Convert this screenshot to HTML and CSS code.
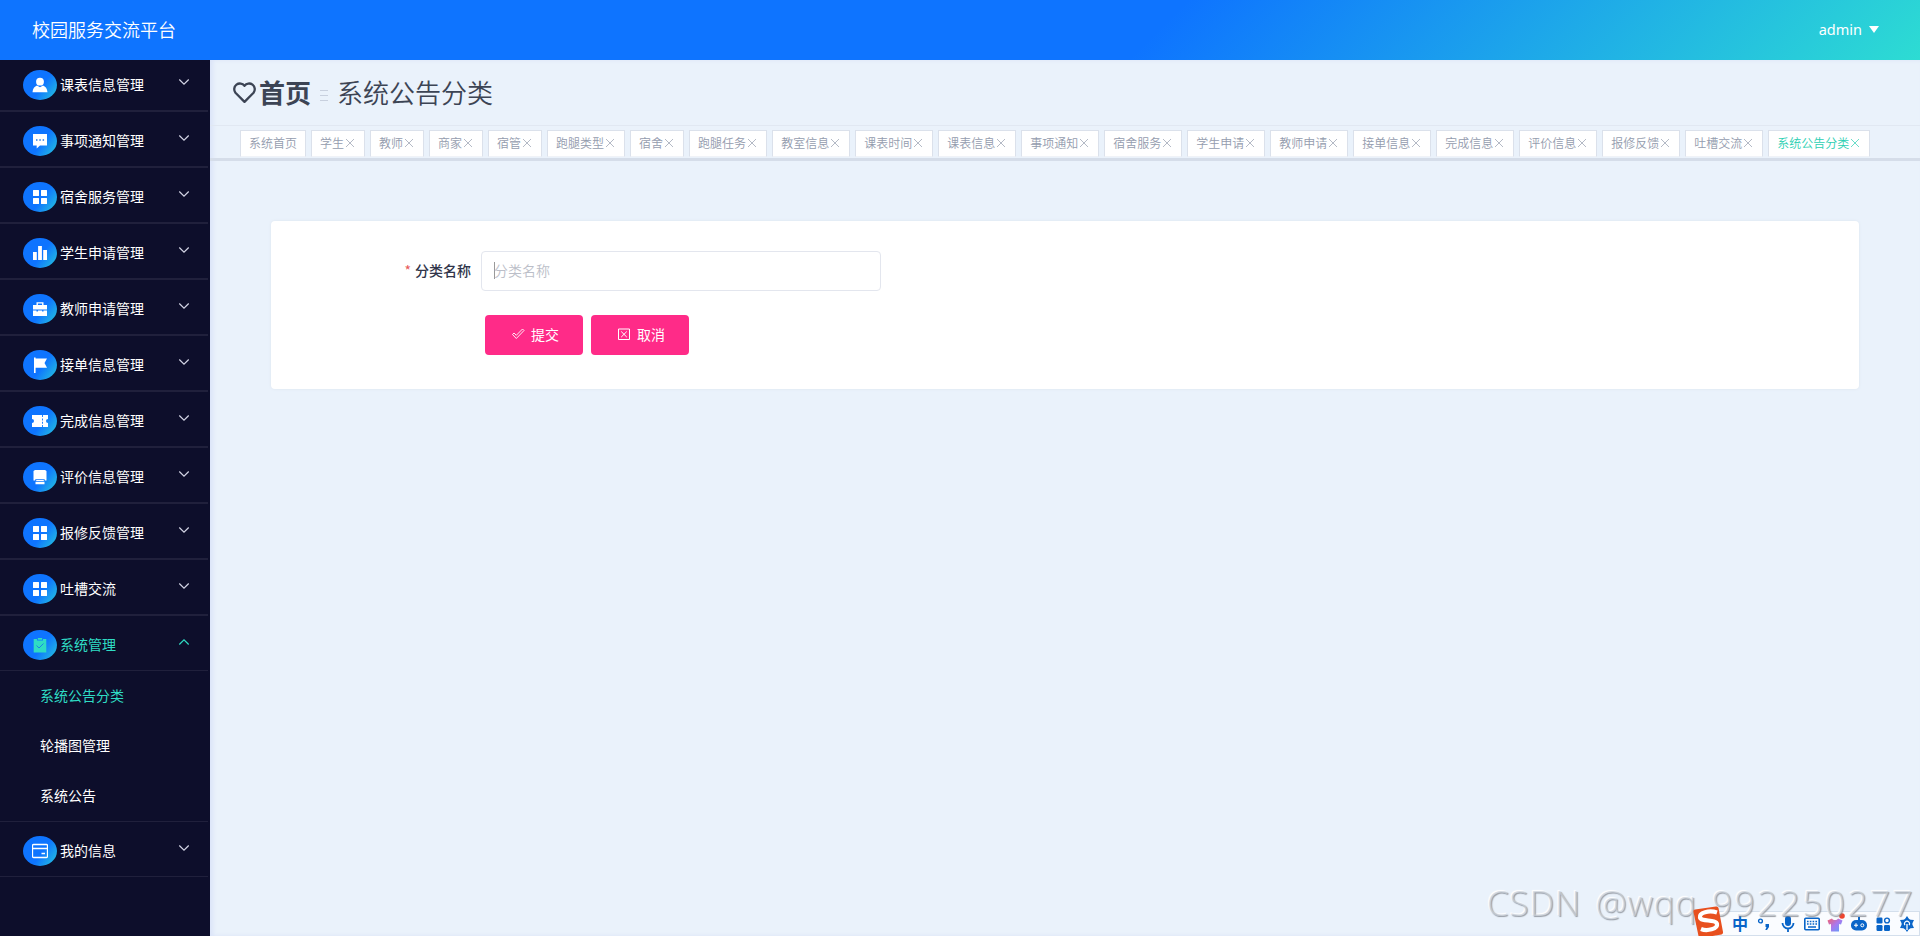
FILE: index.html
```html
<!DOCTYPE html>
<html lang="zh-CN">
<head>
<meta charset="utf-8">
<title>校园服务交流平台</title>
<link rel="stylesheet" href="styles.css">
</head>
<body>
<svg class="defs" width="0" height="0">
  <symbol id="down" viewBox="0 0 12 12"><path d="M1.3 3.5 6 8.2l4.700-4.700" fill="none" stroke="currentColor" stroke-width="1.2"/></symbol>
  <symbol id="grid" viewBox="0 0 16 16"><path fill="currentColor" d="M1.500 1h5a.5.5 0 0 1 .5.5v5a.5.5 0 0 1-.5.5h-5a.5.5 0 0 1-.5-.5v-5a.5.5 0 0 1 .5-.5zM9.500 1h5a.5.5 0 0 1 .5.5v5a.5.5 0 0 1-.5.5h-5a.5.5 0 0 1-.5-.5v-5a.5.5 0 0 1 .5-.5zM1.500 9h5a.5.5 0 0 1 .5.5v5a.5.5 0 0 1-.5.5h-5a.5.5 0 0 1-.5-.5v-5a.5.5 0 0 1 .5-.5zM9.500 9h5a.5.5 0 0 1 .5.5v5a.5.5 0 0 1-.5.5h-5a.5.5 0 0 1-.5-.5v-5a.5.5 0 0 1 .5-.5z"/></symbol>
  <symbol id="close" viewBox="0 0 12 12"><path d="M2 2l8 8M10 2l-8 8" stroke="currentColor" stroke-width=".7"/></symbol>
</svg>
<header class="topbar">
  <div class="brand">校园服务交流平台</div>
  <div class="user">admin <span class="caret"></span></div>
</header>
<div class="layout">
  <aside class="sidebar">
    <ul class="menu">
      <li class="item"><span class="badge"><svg viewBox="0 0 16 16"><circle cx="8" cy="4.700" r="3.900" fill="currentColor"/><path fill="currentColor" d="M.5 15.300c.3-3.600 2-6 4.500-6.800l3 1.700 3-1.700c2.500.8 4.200 3.200 4.500 6.800z"/></svg></span><span class="label">课表信息管理</span><svg class="arrow"><use href="#down"/></svg></li>
      <li class="item"><span class="badge"><svg viewBox="0 0 16 16"><path fill="currentColor" d="M1 1h14v11.500H8l-3.300 3v-3H1z"/><path stroke="#2277e8" stroke-width="1.500" d="M4 7h1.500M7.300 7h1.500M10.600 7h1.500"/></svg></span><span class="label">事项通知管理</span><svg class="arrow"><use href="#down"/></svg></li>
      <li class="item"><span class="badge"><svg><use href="#grid"/></svg></span><span class="label">宿舍服务管理</span><svg class="arrow"><use href="#down"/></svg></li>
      <li class="item"><span class="badge"><svg viewBox="0 0 16 16"><path fill="currentColor" d="M1 7h3.800v8H1zM6.100 1h3.800v14H6.100zM11.200 5H15v10h-3.800z"/></svg></span><span class="label">学生申请管理</span><svg class="arrow"><use href="#down"/></svg></li>
      <li class="item"><span class="badge"><svg viewBox="0 0 16 16"><path fill="currentColor" d="M4.500 4V1.200h7V4H15v4.600H1V4zm1.400 0h4.200V2.600H5.900zM1 9.600h3.500v1h1.400v-1h4.200v1h1.400v-1H15V15H1z"/></svg></span><span class="label">教师申请管理</span><svg class="arrow"><use href="#down"/></svg></li>
      <li class="item"><span class="badge"><svg viewBox="0 0 16 16"><path fill="currentColor" d="M2 .5h1.600v1H15L12.500 6l2.500 4.800H3.600V16H2z"/></svg></span><span class="label">接单信息管理</span><svg class="arrow"><use href="#down"/></svg></li>
      <li class="item"><span class="badge"><svg viewBox="0 0 16 16"><path fill="currentColor" d="M0 2h10v2h.9V2H16v4a2 2 0 0 0 0 4v4h-5.100v-2H10v2H0v-4a2 2 0 0 0 0-4zm10 3.500v2h.9v-2zm0 3.300v2h.9v-2z"/></svg></span><span class="label">完成信息管理</span><svg class="arrow"><use href="#down"/></svg></li>
      <li class="item"><span class="badge"><svg viewBox="0 0 16 16"><path fill="currentColor" d="M3 1h10l1.500 1v9.500h-1.800v-1.300H3.300v1.300H1.500V2zM4.200 11h7.600v1H4.200zM3.500 12.800h9v2.400h-9z"/></svg></span><span class="label">评价信息管理</span><svg class="arrow"><use href="#down"/></svg></li>
      <li class="item"><span class="badge"><svg><use href="#grid"/></svg></span><span class="label">报修反馈管理</span><svg class="arrow"><use href="#down"/></svg></li>
      <li class="item"><span class="badge"><svg><use href="#grid"/></svg></span><span class="label">吐槽交流</span><svg class="arrow"><use href="#down"/></svg></li>
      <li class="item thin active"><span class="badge"><svg viewBox="0 0 16 16"><path fill="currentColor" d="M1.700 2H5v1.500h6V2h3.300v13.500H1.700zM5.800 1h4.400v1.800H5.800z"/><path d="M4.500 8.500l2.500 2.500 4.500-4.500" fill="none" stroke="#1b82e8"/></svg></span><span class="label">系统管理</span><svg class="arrow up"><use href="#down"/></svg></li>
      <li>
        <ul class="submenu">
          <li class="active">系统公告分类</li>
          <li>轮播图管理</li>
          <li>系统公告</li>
        </ul>
      </li>
      <li class="item thin"><span class="badge"><svg viewBox="0 0 16 16"><path fill="none" stroke="currentColor" stroke-width="1.300" d="M1.500 1.500h13a1 1 0 0 1 1 1v11a1 1 0 0 1-1 1h-13a1 1 0 0 1-1-1v-11a1 1 0 0 1 1-1zM.5 5.500h15M9.500 10.500H13"/></svg></span><span class="label">我的信息</span><svg class="arrow"><use href="#down"/></svg></li>
    </ul>
  </aside>
  <main class="main">
    <nav class="crumbs">
      <svg class="heart" viewBox="0 0 24 24"><path d="M12 21 3.300 12.200A5.400 5.400 0 0 1 12 5.500a5.400 5.400 0 0 1 8.700 6.700z" fill="none" stroke="currentColor" stroke-width="2.200" stroke-linejoin="round"/></svg>
      <b>首页</b>
      <span class="sep"><i></i><i></i><i></i></span>
      <span>系统公告分类</span>
    </nav>
    <div class="tabs">
      <span class="tab">系统首页</span>
      <span class="tab">学生<svg><use href="#close"/></svg></span>
      <span class="tab">教师<svg><use href="#close"/></svg></span>
      <span class="tab">商家<svg><use href="#close"/></svg></span>
      <span class="tab">宿管<svg><use href="#close"/></svg></span>
      <span class="tab">跑腿类型<svg><use href="#close"/></svg></span>
      <span class="tab">宿舍<svg><use href="#close"/></svg></span>
      <span class="tab">跑腿任务<svg><use href="#close"/></svg></span>
      <span class="tab">教室信息<svg><use href="#close"/></svg></span>
      <span class="tab">课表时间<svg><use href="#close"/></svg></span>
      <span class="tab">课表信息<svg><use href="#close"/></svg></span>
      <span class="tab">事项通知<svg><use href="#close"/></svg></span>
      <span class="tab">宿舍服务<svg><use href="#close"/></svg></span>
      <span class="tab">学生申请<svg><use href="#close"/></svg></span>
      <span class="tab">教师申请<svg><use href="#close"/></svg></span>
      <span class="tab">接单信息<svg><use href="#close"/></svg></span>
      <span class="tab">完成信息<svg><use href="#close"/></svg></span>
      <span class="tab">评价信息<svg><use href="#close"/></svg></span>
      <span class="tab">报修反馈<svg><use href="#close"/></svg></span>
      <span class="tab">吐槽交流<svg><use href="#close"/></svg></span>
      <span class="tab current">系统公告分类<svg><use href="#close"/></svg></span>
    </div>
    <form class="card">
      <div class="field">
        <label><em>*</em>分类名称</label>
        <div class="input"><span class="cursor"></span>分类名称</div>
      </div>
      <div class="actions">
        <button type="button"><svg viewBox="0 0 14 14"><path d="M1.500 7.500 3 6l2.300 2.300L11.500 2 13 3.500l-7.700 8z" fill="none" stroke="currentColor" stroke-width=".9"/></svg>提交</button>
        <button type="button"><svg viewBox="0 0 14 14"><path d="M1.500 2h11v10.500h-11zM4.200 4.500l5.600 5.600M9.800 4.500l-5.600 5.600" fill="none" stroke="currentColor"/></svg>取消</button>
      </div>
    </form>
  </main>
</div>
<div class="ime">
  <svg class="sogou" viewBox="0 0 32 30"><path d="M1.500 6Q1 4 3 3.600L24 .5q2-.3 2.500 1.500L31 26q.3 2-1.500 2.500L9 32q-2 0-2.500-2z" fill="#e8501e"/><path d="M25 6.500C17 4 7 6.500 8 11.500c1 4.500 16 1.500 17 6.500 1 5-10 7.500-16 5" fill="none" stroke="#fff" stroke-width="4.200"/></svg>
  <div class="tools">
    <b>中</b>
    <svg viewBox="0 0 16 16"><circle cx="4.500" cy="5" r="1.900" fill="none" stroke="currentColor" stroke-width="1.400"/><path d="M9.500 8h3.500v3l-2 3H9.300l1.200-3h-1z" fill="currentColor"/></svg>
    <svg viewBox="0 0 16 16"><rect x="5" y="0" width="6" height="10" rx="3" fill="currentColor"/><path d="M2.500 7a5.500 5.500 0 0 0 11 0M8 12.500V16" fill="none" stroke="currentColor" stroke-width="1.800"/></svg>
    <svg viewBox="0 0 16 16"><rect x=".8" y="2.300" width="14.400" height="11.400" rx="1" fill="none" stroke="currentColor" stroke-width="1.600"/><path d="M3 5.500h10M3 8h10" stroke="currentColor" stroke-width="1.600" stroke-dasharray="1.600 1.200"/><path d="M4 11h8" stroke="currentColor" stroke-width="1.500"/></svg>
    <svg viewBox="0 0 16 16"><defs><linearGradient id="shirt" x2="1" y2="1"><stop stop-color="#f4606c"/><stop offset=".5" stop-color="#a978ee"/><stop offset="1" stop-color="#55a4fb"/></linearGradient></defs><path fill="url(#shirt)" d="M5 2.500c1 2 5 2 6 0l4.500 2-1.500 4-2-.5v7.500H4V8l-2 .5-1.500-4z"/><circle cx="15" cy="0" r="2.800" fill="#ee442e"/></svg>
    <svg viewBox="0 0 16 16"><rect x="0" y="4" width="16" height="10.500" rx="5" fill="currentColor"/><path d="M8 1v4" stroke="currentColor" stroke-width="2"/><path d="M3 9.300h4M5 7.300v4" stroke="#fff" stroke-width="1.100"/><circle cx="11.300" cy="9.300" r="1.500" fill="none" stroke="#fff"/></svg>
    <svg viewBox="0 0 16 16"><g fill="currentColor"><rect x="1.500" y="1.500" width="6" height="6" rx="1.200"/><rect x="1.500" y="9" width="6" height="6" rx="1.200"/><rect x="9" y="9" width="6" height="6" rx="1.200"/></g><circle cx="12" cy="4.500" r="2.400" fill="none" stroke="currentColor" stroke-width="1.400"/></svg>
    <svg viewBox="0 0 16 16"><circle cx="8" cy="8" r="5.500" fill="currentColor"/><path fill="currentColor" d="M8 0l2 3H6zM8 16l-2-3h4zM1 4l3.600-.2-2 3.400zM15 4l-3.600-.2 2 3.400zM1 12l3.600.2-2-3.400zM15 12l-3.600.2 2-3.400z"/><path d="M8 8v6" stroke="#fff" stroke-width="1.300"/><path d="M6 9.200a2.500 2.500 0 1 1 4 0" fill="none" stroke="#fff" stroke-width="1.100"/></svg>
  </div>
</div>
<div class="watermark">CSDN @wqq_<span>992250277</span></div>
</body>
</html>
```
FILE: styles.css
```css
* { box-sizing: border-box; }
body {
  margin: 0;
  height: 936px;
  overflow: hidden;
  position: relative;
  background: #eaf2fb;
  font-family: "Noto Sans CJK SC", sans-serif;
  font-size: 14px;
}
ul { list-style: none; margin: 0; padding: 0; }
.defs { display: block; position: absolute; }
.topbar {
  height: 60px;
  padding: 0 41px 2px 32px;
  display: flex;
  align-items: center;
  justify-content: space-between;
  color: #fff;
  background: linear-gradient(135deg, #0e74ff 60%, #2ddcd3 100%);
}
.brand { font-size: 18px; font-weight: 350; }
.user { display: flex; align-items: center; gap: 7px; font-family: "Noto Sans", sans-serif; font-size: 14.500px; }
.caret { border: 5.500px solid transparent; border-top: 7px solid #fff; border-bottom: 0; }
.layout { display: flex; height: 876px; }
.sidebar { width: 210px; flex: none; background: #0d0e2b; overflow: hidden; color: #fff; }
.menu { margin-top: -4px; width: 208px; }
.item {
  height: 56px;
  padding: 3px 18px 0 23px;
  display: flex;
  align-items: center;
  border-bottom: 2px solid #20203c;
}
.item.thin { height: 55px; border-bottom-width: 1px; }
.badge {
  width: 34px;
  height: 30px;
  border-radius: 50%;
  display: flex;
  align-items: center;
  justify-content: center;
  background: linear-gradient(125deg, #0e74ff 55%, #2ddcd3 110%);
}
.badge svg { width: 16px; height: 16px; }
.label { margin: -2px 0 0 3px; flex: 1; line-height: 20px; }
.arrow { width: 12px; height: 12px; margin-top: -6px; color: #d4d6e6; }
.arrow.up { transform: scaleY(-1); }
.active, .active .arrow { color: #2fdcc4; }
.submenu { height: 151px; border-bottom: 1px solid #20203c; }
.submenu li { height: 50px; line-height: 48px; padding-left: 40px; }
.main { flex: 1; min-width: 0; box-shadow: inset 3px 0 4px #dbe4f8; }
.crumbs {
  height: 66px;
  padding: 0 0 3px 22px;
  display: flex;
  align-items: center;
  font-size: 26px;
  font-weight: 350;
  color: #3c4454;
  border-bottom: 1px solid #e1e8f2;
}
.crumbs b { font-weight: 700; margin-left: 2px; }
.heart { width: 25px; height: 25px; margin-top: 2px; }
.sep { display: flex; flex-direction: column; gap: 4px; margin: 8px 9px 0 9px; }
.sep i { width: 8px; height: 1px; background: #c8d0de; }
.tabs {
  height: 35px;
  padding: 4px 0 0 30px;
  display: flex;
  gap: 5px;
  border-bottom: 3px solid #d5dde9;
}
.tab {
  height: 27px;
  padding: 0 8px 2px;
  display: flex;
  align-items: center;
  border: 1px solid #dbe1eb;
  border-bottom-color: #f0f3f8;
  background: #fff;
  color: #949cae;
  font-size: 12px;
  font-weight: 350;
  white-space: nowrap;
}
.tab svg { width: 12px; height: 12px; margin-top: 1px; }
.tab.current { color: #2bcfb2; }
.card {
  margin: 60px 61px 0 61px;
  height: 168px;
  padding: 30px 0 0 130px;
  background: #fff;
  border-radius: 4px;
  box-shadow: 0 0 3px #dbe4ef;
}
.field { display: flex; align-items: center; }
.field label { width: 80px; text-align: right; padding: 0 10px 2px 0; white-space: nowrap; font-weight: 500; color: #30354a; }
.field em { color: #e85a5a; font-style: normal; margin-right: 4px; font-weight: 400; }
.input {
  width: 400px;
  height: 40px;
  padding: 0 0 2px 12px;
  display: flex;
  align-items: center;
  border: 1px solid #e3e6ee;
  border-radius: 4px;
  color: #bbbec8;
  font-weight: 350;
}
.cursor { width: 1px; height: 17px; margin-right: -1px; background: #999; }
.actions { display: flex; gap: 8px; margin: 24px 0 0 84px; }
button {
  width: 98px;
  height: 40px;
  padding: 0 0 2px 2px;
  border: 0;
  border-radius: 4px;
  display: flex;
  align-items: center;
  justify-content: center;
  gap: 6px;
  background: #ff2b88;
  color: #fff;
  font: 400 14px "Noto Sans CJK SC", sans-serif;
}
button svg { width: 14px; height: 14px; }
.ime { position: absolute; right: 0; bottom: 0; display: flex; align-items: flex-end; height: 30px; }
.sogou { width: 32px; height: 30px; margin-right: -8px; z-index: 1; }
.tools {
  width: 204px;
  height: 25px;
  padding: 0 4px 0 15px;
  display: flex;
  align-items: center;
  justify-content: space-between;
  background: #fafcff;
  border: 1px solid #d4dfec;
  color: #0864c8;
}
.tools b { width: 16px; font-size: 16px; line-height: 20px; margin-top: -2px; }
.tools svg { width: 16px; height: 16px; overflow: visible; }
.watermark {
  position: absolute;
  left: 1487px;
  bottom: 12px;
  font: 300 35px/42px "Open Sans", sans-serif;
  letter-spacing: .8px;
  word-spacing: 5px;
  color: rgba(205, 211, 219, .7);
  white-space: nowrap;
  text-shadow: 1px 1px 1px rgba(120, 126, 134, .75), -1px -1px 1px #fff;
}
.watermark span { letter-spacing: 2.600px; }
```
